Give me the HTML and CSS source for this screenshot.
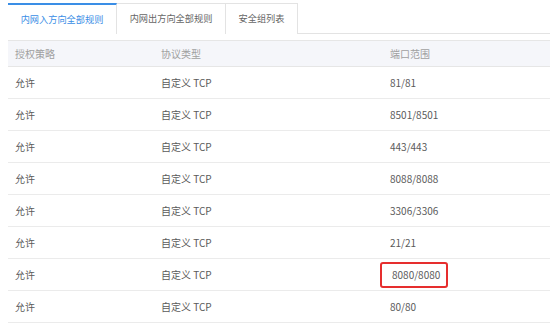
FILE: index.html
```html
<!DOCTYPE html>
<html lang="zh-CN">
<head>
    <meta charset="UTF-8">
    <meta name="viewport" content="width=device-width, initial-scale=1.0">
    <title>安全组规则</title>
    <link rel="stylesheet" href="styles.css">
</head>
<body>
    <div class="panel">
        <div class="tabs">
            <div class="tab active">内网入方向全部规则</div>
            <div class="tab">内网出方向全部规则</div>
            <div class="tab short">安全组列表</div>
        </div>

        <table class="rules">
            <thead>
                <tr>
                    <th class="col-policy">授权策略</th>
                    <th class="col-proto">协议类型</th>
                    <th>端口范围</th>
                </tr>
            </thead>
            <tbody>
                <tr><td>允许</td><td>自定义 TCP</td><td>81/81</td></tr>
                <tr><td>允许</td><td>自定义 TCP</td><td>8501/8501</td></tr>
                <tr><td>允许</td><td>自定义 TCP</td><td>443/443</td></tr>
                <tr><td>允许</td><td>自定义 TCP</td><td>8088/8088</td></tr>
                <tr><td>允许</td><td>自定义 TCP</td><td>3306/3306</td></tr>
                <tr><td>允许</td><td>自定义 TCP</td><td>21/21</td></tr>
                <tr><td>允许</td><td>自定义 TCP</td><td><span class="mark">8080/8080</span></td></tr>
                <tr><td>允许</td><td>自定义 TCP</td><td>80/80</td></tr>
            </tbody>
        </table>
    </div>
</body>
</html>
```

FILE: styles.css
```css
body {
    margin: 0;
    background: #fff;
    font-family: "Noto Sans CJK SC", "Noto Sans", sans-serif;
    font-size: 10px;
    color: #5a5a5a;
}
.panel {
    width: 542px;
    padding: 3px 0 0 8px;
}
.tabs {
    display: flex;
    height: 30px;
    border-bottom: 1px solid #e3e3e3;
}
.tab {
    box-sizing: border-box;
    width: 109px;
    height: 31px;
    line-height: 29px;
    border-right: 1px solid #e3e3e3;
    border-top: 1px solid #e3e3e3;
    background: #fff;
    color: #666;
    font-size: 9.2px;
    text-align: center;
    white-space: nowrap;
}
.tab.active {
    border-top: 2px solid #3a8ee6;
    color: #3a8ee6;
    line-height: 28px;
}
.tab.short {
    width: 72px;
}
.rules {
    width: 542px;
    margin-top: 6px;
    border-collapse: collapse;
}
.rules th {
    height: 25px;
    padding: 0 0 0 7px;
    background: #f5f6fa;
    border-top: 1px solid #e6e6e6;
    border-bottom: 1px solid #e6e6e6;
    color: #a0a0a0;
    font-weight: normal;
    text-align: left;
    white-space: nowrap;
}
.col-policy {
    width: 139px;
}
.col-proto {
    width: 222px;
}
.rules td {
    height: 31px;
    padding: 0 0 0 7px;
    border-bottom: 1px solid #ebebeb;
    white-space: nowrap;
}
.mark {
    display: inline-block;
    box-sizing: border-box;
    width: 68px;
    height: 26px;
    margin-left: -10px;
    padding-left: 10px;
    line-height: 22px;
    border: 2px solid #e62e2e;
    border-radius: 3px;
}
```
